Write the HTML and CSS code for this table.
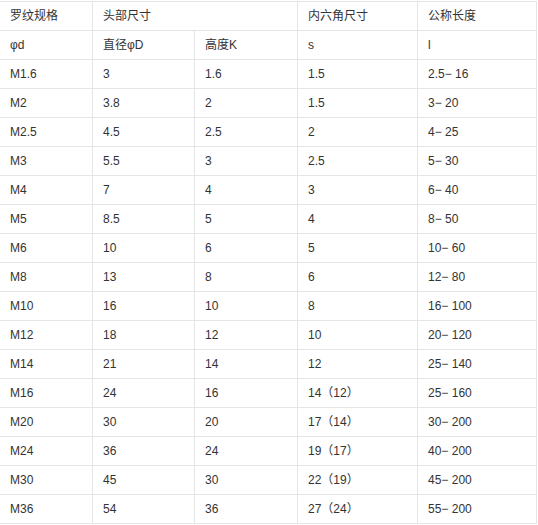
FILE: index.html
```
<!DOCTYPE html>
<html lang="zh-CN">
<head>
<meta charset="utf-8">
<title>螺钉尺寸表</title>
<link rel="stylesheet" href="styles.css">
</head>
<body>
<table class="spec">
  <colgroup>
    <col class="c1"><col class="c2"><col class="c3"><col class="c4"><col class="c5">
  </colgroup>
  <tbody>
    <tr><td>罗纹规格</td><td colspan="2">头部尺寸</td><td>内六角尺寸</td><td>公称长度</td></tr>
    <tr><td>φd</td><td>直径φD</td><td>高度K</td><td>s</td><td>l</td></tr>
    <tr><td>M1.6</td><td>3</td><td>1.6</td><td>1.5</td><td>2.5− 16</td></tr>
    <tr><td>M2</td><td>3.8</td><td>2</td><td>1.5</td><td>3− 20</td></tr>
    <tr><td>M2.5</td><td>4.5</td><td>2.5</td><td>2</td><td>4− 25</td></tr>
    <tr><td>M3</td><td>5.5</td><td>3</td><td>2.5</td><td>5− 30</td></tr>
    <tr><td>M4</td><td>7</td><td>4</td><td>3</td><td>6− 40</td></tr>
    <tr><td>M5</td><td>8.5</td><td>5</td><td>4</td><td>8− 50</td></tr>
    <tr><td>M6</td><td>10</td><td>6</td><td>5</td><td>10− 60</td></tr>
    <tr><td>M8</td><td>13</td><td>8</td><td>6</td><td>12− 80</td></tr>
    <tr><td>M10</td><td>16</td><td>10</td><td>8</td><td>16− 100</td></tr>
    <tr><td>M12</td><td>18</td><td>12</td><td>10</td><td>20− 120</td></tr>
    <tr><td>M14</td><td>21</td><td>14</td><td>12</td><td>25− 140</td></tr>
    <tr><td>M16</td><td>24</td><td>16</td><td>14（12）</td><td>25− 160</td></tr>
    <tr><td>M20</td><td>30</td><td>20</td><td>17（14）</td><td>30− 200</td></tr>
    <tr><td>M24</td><td>36</td><td>24</td><td>19（17）</td><td>40− 200</td></tr>
    <tr><td>M30</td><td>45</td><td>30</td><td>22（19）</td><td>45− 200</td></tr>
    <tr><td>M36</td><td>54</td><td>36</td><td>27（24）</td><td>55− 200</td></tr>
  </tbody>
</table>
</body>
</html>
```
FILE: styles.css
```
html, body {
  margin: 0;
  padding: 0;
  background: #ffffff;
}
body {
  padding-top: 1px;
  font-family: "Liberation Sans", Arial, "Noto Sans CJK SC", sans-serif;
  font-size: 12px;
  color: #333333;
}
.spec {
  border-collapse: separate;
  border-spacing: 0;
  table-layout: fixed;
  width: 537px;
  border-top: 1px solid #e5e5e5;
}
.c1 { width: 93px; }
.c2 { width: 102px; }
.c3 { width: 103px; }
.c4 { width: 120px; }
.c5 { width: 119px; }
.spec td {
  box-sizing: border-box;
  height: 29px;
  padding: 0 10px;
  border-right: 1px solid #e5e5e5;
  border-bottom: 1px solid #e5e5e5;
  vertical-align: middle;
  text-align: left;
  white-space: nowrap;
  line-height: 16px;
}
```
